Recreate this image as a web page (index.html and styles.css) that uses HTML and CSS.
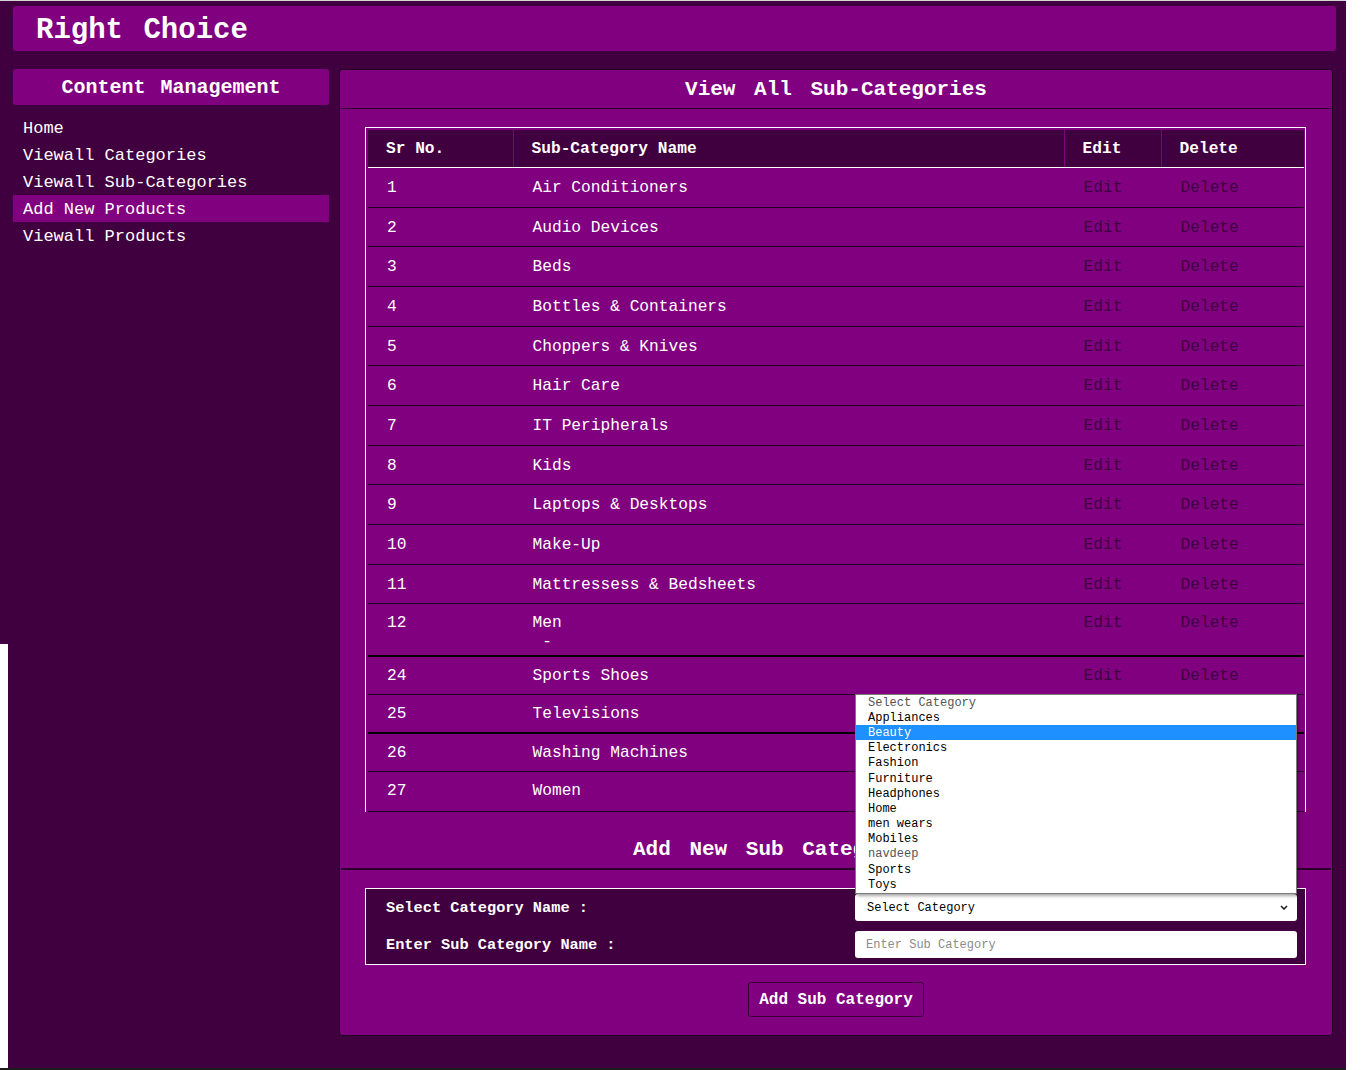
FILE: index.html
```html
<!DOCTYPE html>
<html lang="en">
<head>
<meta charset="utf-8">
<title>Right Choice - View All Sub-Categories</title>
<link rel="stylesheet" href="styles.css">
</head>
<body>
<div class="page">
  <header class="topbar"><h1 class="brand">Right Choice</h1></header>
  <div class="layout">
    <aside class="sidebar">
      <h2 class="side-title">Content Management</h2>
      <nav class="side-nav">
        <a href="#">Home</a>
        <a href="#">Viewall Categories</a>
        <a href="#">Viewall Sub-Categories</a>
        <a href="#" class="active">Add New Products</a>
        <a href="#">Viewall Products</a>
      </nav>
    </aside>
    <main class="panel">
      <h2 class="panel-title">View All Sub-Categories</h2>
      <div class="table-wrap">
        <table class="grid">
          <colgroup>
            <col class="c1"><col class="c2"><col class="c3"><col class="c4">
          </colgroup>
          <thead>
            <tr><th>Sr No.</th><th>Sub-Category Name</th><th>Edit</th><th>Delete</th></tr>
          </thead>
          <tbody>
            <tr><td>1</td><td>Air Conditioners</td><td class="act">Edit</td><td class="act">Delete</td></tr>
            <tr><td>2</td><td>Audio Devices</td><td class="act">Edit</td><td class="act">Delete</td></tr>
            <tr><td>3</td><td>Beds</td><td class="act">Edit</td><td class="act">Delete</td></tr>
            <tr><td>4</td><td>Bottles &amp; Containers</td><td class="act">Edit</td><td class="act">Delete</td></tr>
            <tr><td>5</td><td>Choppers &amp; Knives</td><td class="act">Edit</td><td class="act">Delete</td></tr>
            <tr><td>6</td><td>Hair Care</td><td class="act">Edit</td><td class="act">Delete</td></tr>
            <tr><td>7</td><td>IT Peripherals</td><td class="act">Edit</td><td class="act">Delete</td></tr>
            <tr><td>8</td><td>Kids</td><td class="act">Edit</td><td class="act">Delete</td></tr>
            <tr><td>9</td><td>Laptops &amp; Desktops</td><td class="act">Edit</td><td class="act">Delete</td></tr>
            <tr><td>10</td><td>Make-Up</td><td class="act">Edit</td><td class="act">Delete</td></tr>
            <tr><td>11</td><td>Mattressess &amp; Bedsheets</td><td class="act">Edit</td><td class="act">Delete</td></tr>
            <tr class="tall"><td>12</td><td>Men<br>&nbsp;-</td><td class="act">Edit</td><td class="act">Delete</td></tr>
            <tr class="short"><td>24</td><td>Sports Shoes</td><td class="act">Edit</td><td class="act">Delete</td></tr>
            <tr class="short thick"><td>25</td><td>Televisions</td><td class="act">Edit</td><td class="act">Delete</td></tr>
            <tr class="short"><td>26</td><td>Washing Machines</td><td class="act">Edit</td><td class="act">Delete</td></tr>
            <tr class="short last"><td>27</td><td>Women</td><td class="act">Edit</td><td class="act">Delete</td></tr>
          </tbody>
        </table>
      </div>

      <h2 class="panel-title add-title">Add New Sub Category</h2>
      <form class="add-form">
        <div class="form-box">
          <label class="form-label" for="cat">Select Category Name :</label>
          <div class="select-wrap">
            <select id="cat" class="field select-field">
              <option>Select Category</option>
              <option>Appliances</option>
              <option>Beauty</option>
              <option>Electronics</option>
              <option>Fashion</option>
              <option>Furniture</option>
              <option>Headphones</option>
              <option>Home</option>
              <option>men wears</option>
              <option>Mobiles</option>
              <option>navdeep</option>
              <option>Sports</option>
              <option>Toys</option>
            </select>
            <svg class="chev" viewBox="0 0 8 5" width="8" height="5" aria-hidden="true"><path d="M1 1l3 3 3-3" fill="none" stroke="#222" stroke-width="1.6"/></svg>
            <ul class="dropdown">
              <li class="faint">Select Category</li>
              <li>Appliances</li>
              <li class="sel">Beauty</li>
              <li>Electronics</li>
              <li>Fashion</li>
              <li>Furniture</li>
              <li>Headphones</li>
              <li>Home</li>
              <li>men wears</li>
              <li>Mobiles</li>
              <li class="faint">navdeep</li>
              <li>Sports</li>
              <li>Toys</li>
            </ul>
          </div>
          <label class="form-label" for="sub">Enter Sub Category Name :</label>
          <input id="sub" class="field" type="text" placeholder="Enter Sub Category">
        </div>
        <button type="button" class="btn">Add Sub Category</button>
      </form>
    </main>
  </div>
</div>
</body>
</html>
```

FILE: styles.css
```css
* { box-sizing: border-box; }

html, body {
  margin: 0;
  padding: 0;
  background: #fff;
}

body {
  font-family: "Liberation Mono", "Courier New", monospace;
  color: #fff;
}

.page {
  width: 1346px;
  height: 1070px;
  border-top: 1px solid #d6d6d6;
  border-bottom: 2px solid #1c1c1c;
  padding: 5px 10px 0 13px;
  background: linear-gradient(#fff, #fff) 0 643px / 8px 500px no-repeat, #400040;
}

.topbar {
  height: 45px;
  padding: 5px 0 0 23px;
  background: #800080;
  border-radius: 3px;
}

.brand {
  margin: 0;
  font-size: 29px;
  line-height: 40px;
  font-weight: bold;
  word-spacing: 3px;
}

.layout {
  display: flex;
  align-items: flex-start;
  gap: 10px;
  margin-top: 18px;
}

.sidebar {
  width: 316px;
  flex: none;
}

.side-title {
  margin: 0;
  height: 36px;
  line-height: 37px;
  background: #800080;
  border-radius: 3px;
  text-align: center;
  font-size: 20px;
  font-weight: bold;
  word-spacing: 3px;
}

.side-nav {
  display: flex;
  flex-direction: column;
  margin-top: 9px;
}

.side-nav a {
  display: block;
  height: 27px;
  padding: 2px 0 0 10px;
  line-height: 25px;
  font-size: 17px;
  color: #fff;
  text-decoration: none;
}

.side-nav a.active {
  background: #800080;
}

.panel {
  width: 994px;
  height: 967px;
  flex: none;
  display: flex;
  flex-direction: column;
  background: #800080;
  border: 1px solid #1f001f;
  border-radius: 3px;
}

.panel-title {
  margin: 0 1px;
  height: 39px;
  line-height: 40px;
  border-bottom: 1px solid #2a002a;
  text-align: center;
  font-size: 21px;
  font-weight: bold;
  word-spacing: 6px;
}

.table-wrap {
  margin: 18px 26px 0 25px;
  border: 1px solid #fff;
  border-bottom: 0;
  padding: 2px 2px 0;
}

.grid {
  width: 936px;
  border-collapse: collapse;
  table-layout: fixed;
  font-size: 16.2px;
  line-height: 19px;
}

.c1 { width: 145px; }
.c2 { width: 551px; }
.c3 { width: 97px; }
.c4 { width: 143px; }

.grid th {
  background: #400040;
  text-align: left;
  font-weight: bold;
  padding: 10px 18px 8px;
  border-right: 1px solid #800080;
  border-bottom: 1px solid #fff;
}

.grid th:last-child { border-right: 0; }

.grid td {
  padding: 11px 19px 8.67px;
  vertical-align: top;
  border-right: 1px solid #800080;
  border-bottom: 1px solid #1f001f;
  white-space: nowrap;
}

.grid td:last-child { border-right: 0; }

.grid td.act { color: #400040; }

.grid tr.tall td {
  padding-top: 10px;
  padding-bottom: 2.7px;
  border-bottom: 2px solid #000;
}

.grid tr.short td {
  padding-top: 10px;
  padding-bottom: 8px;
}

.grid tr.thick td {
  border-bottom: 2px solid #000;
}

.grid tr.last td {
  padding-bottom: 9.7px;
}

.add-title {
  margin-top: 18px;
  height: 40px;
  line-height: 40px;
  border-bottom-width: 2px;
  padding-right: 136px;
}

.add-form {
  display: flex;
  flex-direction: column;
}

.form-box {
  margin: 18px 26px 0 25px;
  border: 1px solid #fff;
  background: #400040;
  padding: 5px 8px 6px 20px;
  display: grid;
  grid-template-columns: 1fr 442px;
  row-gap: 10px;
  align-items: center;
}

.form-label {
  font-size: 15.3px;
  font-weight: bold;
  padding-top: 1px;
}

.select-wrap {
  position: relative;
  height: 27px;
}

.field {
  display: block;
  width: 100%;
  height: 27px;
  border: 0;
  border-radius: 3px;
  background: #fff;
  color: #000;
  font-family: "Liberation Mono", "Courier New", monospace;
  font-size: 12px;
  outline: none;
}

.select-field {
  appearance: none;
  -webkit-appearance: none;
  padding: 1px 0 0 12px;
}

input.field {
  padding: 1px 11px 0;
}

input.field::placeholder {
  color: #8a8a8a;
}

.chev {
  position: absolute;
  right: 9px;
  top: 11px;
  pointer-events: none;
}

.dropdown {
  position: absolute;
  left: 0;
  bottom: 100%;
  z-index: 5;
  width: 442px;
  height: 200px;
  margin: 0;
  padding: 0;
  list-style: none;
  background: #fff;
  border: 1px solid #7a7a7a;
  box-shadow: 2px 2px 3px rgba(0, 0, 0, 0.35);
  font-size: 12px;
  color: #000;
}

.dropdown li {
  height: 15.2px;
  line-height: 16px;
  padding-left: 12px;
  white-space: nowrap;
}

.dropdown li.sel {
  background: #1e90ff;
  color: #fff;
}

.dropdown li.faint {
  color: #555;
}

.btn {
  display: block;
  align-self: center;
  margin-top: 17px;
  height: 35px;
  padding: 1px 10px 0;
  background: transparent;
  border: 1px solid #3a003a;
  border-radius: 3px;
  color: #fff;
  font-family: "Liberation Mono", "Courier New", monospace;
  font-size: 16px;
  font-weight: bold;
}
```
